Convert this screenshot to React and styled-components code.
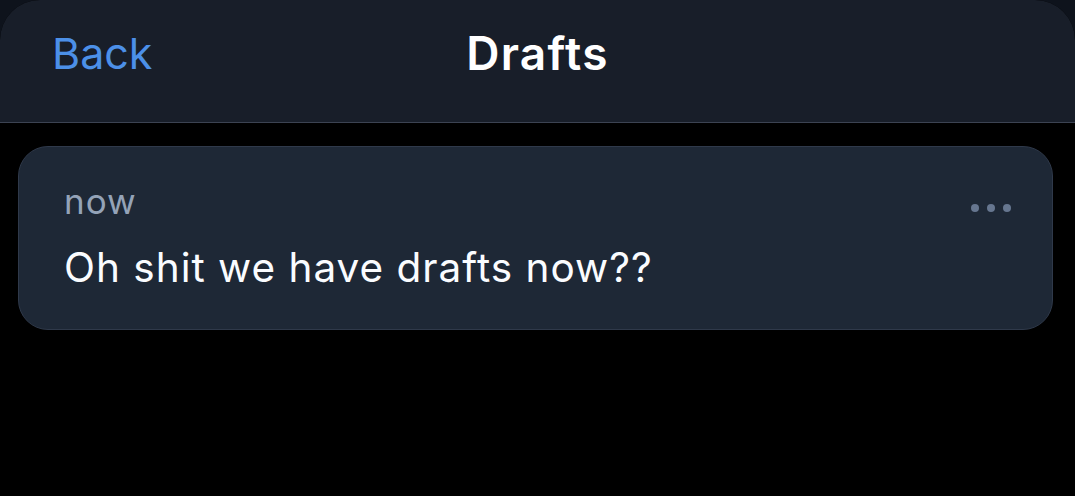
import styled, { createGlobalStyle } from "styled-components";

const GlobalStyle = createGlobalStyle`
  html, body {
    margin: 0;
    padding: 0;
    background: #0e131c;
  }

  body {
    font-family: Inter, "Noto Sans", sans-serif;
    -webkit-font-smoothing: antialiased;
  }
`;

const Sheet = styled.div`
  min-height: 100vh;
  background: #000;
  border-radius: 40px 40px 0 0;
  overflow: hidden;
`;

const Header = styled.header`
  display: grid;
  grid-template-columns: 1fr auto 1fr;
  align-items: center;
  height: 123px;
  box-sizing: border-box;
  padding: 0 52px 15px;
  background: #181e29;
  border-bottom: 1px solid #3c4352;
`;

const BackButton = styled.button`
  justify-self: start;
  padding: 0;
  border: none;
  background: none;
  font-family: inherit;
  font-size: 43px;
  font-weight: 400;
  line-height: 1.2;
  color: #4c90e8;
  cursor: pointer;
`;

const Title = styled.h1`
  margin: 0;
  font-size: 46px;
  font-weight: 600;
  letter-spacing: 1.3px;
  line-height: 1.2;
  color: #fff;
`;

const List = styled.ul`
  list-style: none;
  margin: 0;
  padding: 23px 22px 0 18px;
  display: flex;
  flex-direction: column;
  gap: 16px;
`;

const DraftCard = styled.li`
  padding: 31px 41px 35px 45px;
  background: #1e2836;
  border: 1px solid #2f394a;
  border-radius: 30px;
`;

const MetaRow = styled.div`
  display: flex;
  justify-content: space-between;
  align-items: center;
  margin-bottom: 18px;
`;

const Timestamp = styled.span`
  font-size: 35px;
  line-height: 46px;
  letter-spacing: 1px;
  color: #94a3b8;
`;

const MoreButton = styled.button`
  display: flex;
  gap: 8px;
  margin-top: 13px;
  padding: 0;
  border: none;
  background: none;
  cursor: pointer;
`;

const Dot = styled.span`
  width: 8px;
  height: 8px;
  border-radius: 50%;
  background: #66768f;
`;

const DraftText = styled.p`
  margin: 0;
  font-size: 40.5px;
  line-height: 52px;
  letter-spacing: 1px;
  color: #fafcff;
`;

const drafts = [{ id: 1, time: "now", text: "Oh shit we have drafts now??" }];

export default function App() {
  return (
    <>
      <GlobalStyle />
      <Sheet>
        <Header>
          <BackButton>Back</BackButton>
          <Title>Drafts</Title>
          <span />
        </Header>

        <List>
          {drafts.map((draft) => (
            <DraftCard key={draft.id}>
              <MetaRow>
                <Timestamp>{draft.time}</Timestamp>
                <MoreButton aria-label="More">
                  <Dot />
                  <Dot />
                  <Dot />
                </MoreButton>
              </MetaRow>
              <DraftText>{draft.text}</DraftText>
            </DraftCard>
          ))}
        </List>
      </Sheet>
    </>
  );
}
